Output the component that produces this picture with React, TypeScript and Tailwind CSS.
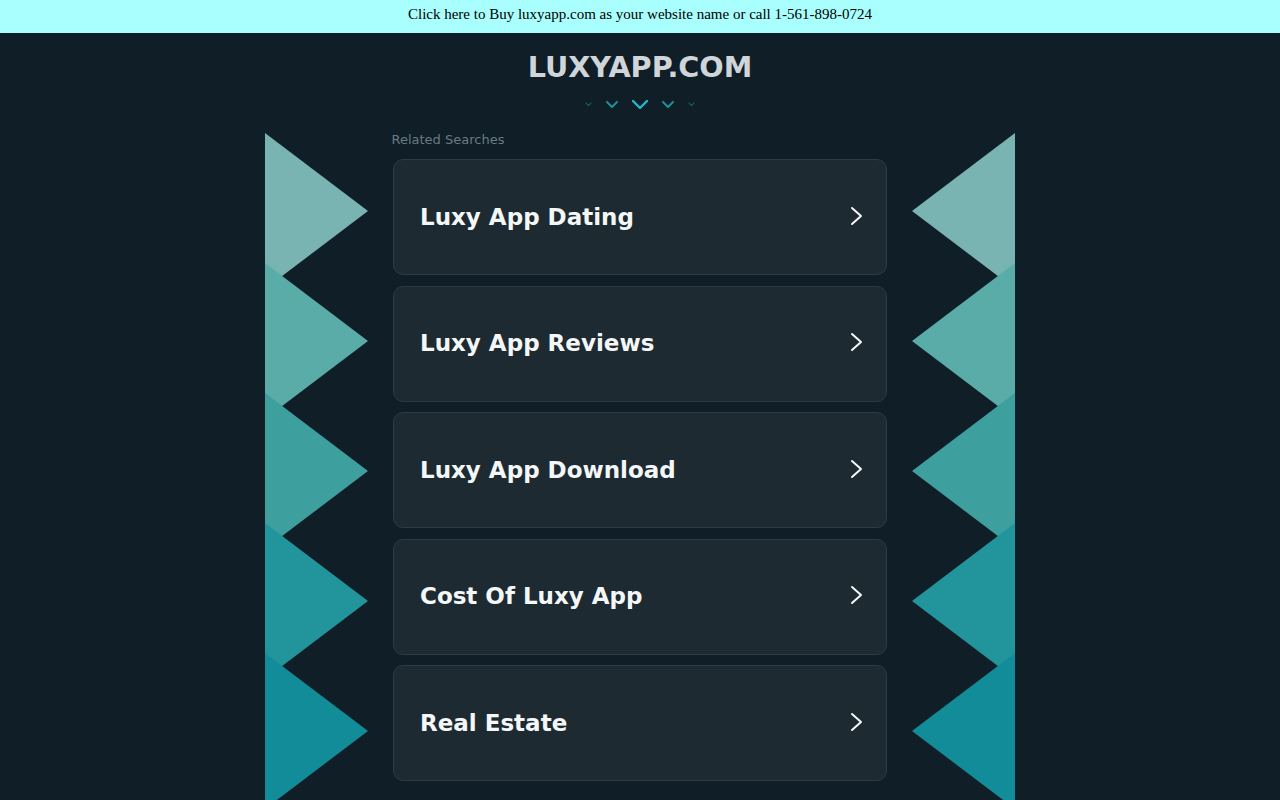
import React from "react";

const items = [
  "Luxy App Dating",
  "Luxy App Reviews",
  "Luxy App Download",
  "Cost Of Luxy App",
  "Real Estate",
];

const triColors = ["#79b4b3", "#5aaca8", "#3d9f9e", "#21959b", "#128c98"];

function Triangles({ flip }: { flip?: boolean }) {
  return (
    <svg width="103" height="680" viewBox="0 0 103 680" className="shrink-0 block">
      <g transform={flip ? "translate(103,0) scale(-1,1)" : undefined}>
        {triColors.map((c, i) => {
          const y = i * 130;
          return <polygon key={i} points={`0,${y} 103,${y + 78} 0,${y + 156}`} fill={c} />;
        })}
      </g>
    </svg>
  );
}

function Chev({ size, color, stroke }: { size: number; color: string; stroke: number }) {
  return (
    <svg width={size} height={size / 2 + 2} viewBox={`0 0 ${size} ${size / 2 + 2}`}>
      <polyline
        points={`1,1 ${size / 2},${size / 2} ${size - 1},1`}
        fill="none"
        stroke={color}
        strokeWidth={stroke}
        strokeLinecap="round"
        strokeLinejoin="round"
      />
    </svg>
  );
}

export default function App() {
  return (
    <div className="min-h-[800px] h-[800px] overflow-hidden bg-[#0f1e27]">
      <div className="h-[33px] bg-[#a9fffd] flex items-center justify-center text-black text-[15px] pb-[4px]" style={{ fontFamily: '"Liberation Serif", serif' }}>
        Click here to Buy luxyapp.com as your website name or call 1-561-898-0724
      </div>
      <div className="flex flex-col items-center" style={{ fontFamily: '"DejaVu Sans", sans-serif' }}>
        <div className="mt-[17px] text-[28.7px] leading-[34px] font-bold text-[#cfd5d9]">LUXYAPP.COM</div>
        <div className="mt-[16px] h-[10px] flex items-center gap-[14px]">
          <Chev size={7} color="#24505b" stroke={1.2} />
          <Chev size={12} color="#1f8e99" stroke={2} />
          <Chev size={16} color="#25b7cb" stroke={2.4} />
          <Chev size={12} color="#1f8e99" stroke={2} />
          <Chev size={7} color="#24505b" stroke={1.2} />
        </div>
        <div className="mt-[23px] flex items-start">
          <Triangles />
          <div className="w-[544px] flex flex-col items-center">
            <div className="w-[497px] text-[13px] leading-[14px] text-[#6a7b83]">Related Searches</div>
            <div className="mt-[12px] flex flex-col gap-[10.5px]">
              {items.map((t) => (
                <div
                  key={t}
                  className="w-[494px] h-[116px] rounded-[10px] bg-[#1e2a31] border border-[#2b3c44] flex items-center justify-between pl-[26px] pr-[22px]"
                >
                  <span className="text-[23px] font-bold text-[#f4f7f8]">{t}</span>
                  <svg width="14" height="20" viewBox="0 0 14 20" className="mb-[3px]">
                    <polyline points="2,2 11,10 2,18" fill="none" stroke="#f4f7f8" strokeWidth="2" strokeLinecap="round" strokeLinejoin="round" />
                  </svg>
                </div>
              ))}
            </div>
          </div>
          <Triangles flip />
        </div>
      </div>
    </div>
  );
}
